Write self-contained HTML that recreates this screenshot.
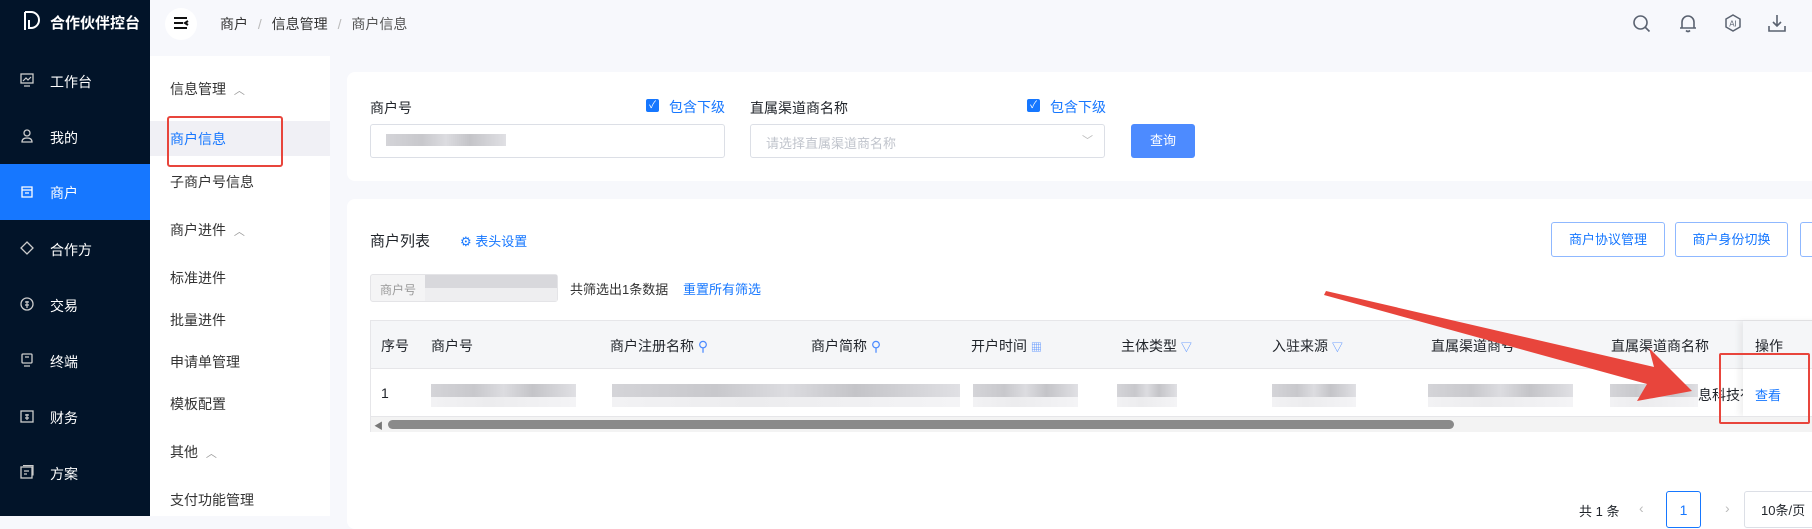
<!DOCTYPE html>
<html><head><meta charset="utf-8"><style>
*{margin:0;padding:0;box-sizing:border-box}
body{width:1812px;height:516px;overflow:hidden;background:#f7f8fc;font-family:"Liberation Sans","Noto Sans CJK SC",sans-serif;font-size:14px;color:#1f2329;position:relative}
.abs{position:absolute;white-space:nowrap}
.side{position:absolute;left:0;top:0;width:150px;height:516px;background:#021429}
.nav{position:absolute;left:0;width:150px;height:56px;color:#fff;font-size:14px}
.nav span{position:absolute;left:50px;top:19px}
.nav svg{position:absolute;left:20px;top:20px}
.menu{position:absolute;left:150px;top:56px;width:180px;height:460px;background:#fff}
.mi{position:absolute;left:20px;color:#333;font-size:14px}
.card{position:absolute;background:#fff;border-radius:8px}
.blur{position:absolute;background:linear-gradient(90deg,#d4d4d8,#c8c8cc 30%,#dcdce0 50%,#c4c4c8 70%,#e0e0e4);height:13px}
.blur2{position:absolute;background:linear-gradient(90deg,#f2f2f4,#ececee 40%,#f4f4f6);height:10px}
.th{position:absolute;top:336px;color:#1f2329}
.btn{position:absolute;border:1px solid #8fb8ff;border-radius:3px;color:#1677ff;font-size:13px;text-align:center;line-height:33px;background:#fff}
</style></head><body>
<div class="side">
 <svg class="abs" style="left:22px;top:10px" width="20" height="22" viewBox="0 0 20 22"><path d="M3 2v18M3 2h6a8 8 0 010 16H7v-8" fill="none" stroke="#fff" stroke-width="2"/></svg>
 <div class="abs" style="left:50px;top:12px;color:#fff;font-weight:bold;font-size:15px">合作伙伴控台</div>
 <div class="nav" style="top:53px"><svg width="14" height="14" viewBox="0 0 14 14"><rect x="1" y="1" width="12" height="9" fill="none" stroke="#ccc" stroke-width="1.3"/><path d="M3 8l3-3 2 2 3-3M4 13h6" stroke="#ccc" fill="none" stroke-width="1.2"/></svg><span>工作台</span></div>
 <div class="nav" style="top:109px"><svg width="14" height="14" viewBox="0 0 14 14"><circle cx="7" cy="4" r="3" fill="none" stroke="#ccc" stroke-width="1.3"/><path d="M2 13q0-4 5-4t5 4z" fill="none" stroke="#ccc" stroke-width="1.3"/></svg><span>我的</span></div>
 <div class="nav" style="top:164px;background:#1677ff"><svg width="14" height="14" viewBox="0 0 14 14"><path d="M2 3h10v10H2zM2 6h10M5 9h4" fill="none" stroke="#fff" stroke-width="1.3"/></svg><span>商户</span></div>
 <div class="nav" style="top:221px"><svg width="14" height="14" viewBox="0 0 14 14"><path d="M7 1l6 6-6 6-6-6z" fill="none" stroke="#ccc" stroke-width="1.3"/></svg><span>合作方</span></div>
 <div class="nav" style="top:277px"><svg width="14" height="14" viewBox="0 0 14 14"><circle cx="7" cy="7" r="6" fill="none" stroke="#ccc" stroke-width="1.3"/><path d="M5 5h4M5 8h4M7 4v7" stroke="#ccc" stroke-width="1.2"/></svg><span>交易</span></div>
 <div class="nav" style="top:333px"><svg width="14" height="14" viewBox="0 0 14 14"><rect x="2" y="1" width="10" height="9" rx="1" fill="none" stroke="#ccc" stroke-width="1.3"/><path d="M4 13h6M5 4h4" stroke="#ccc" stroke-width="1.2"/></svg><span>终端</span></div>
 <div class="nav" style="top:389px"><svg width="14" height="14" viewBox="0 0 14 14"><rect x="1" y="2" width="12" height="11" fill="none" stroke="#ccc" stroke-width="1.3"/><path d="M5 6h4M5 9h4M7 5v6" stroke="#ccc" stroke-width="1.2"/></svg><span>财务</span></div>
 <div class="nav" style="top:445px"><svg width="14" height="14" viewBox="0 0 14 14"><rect x="1" y="2" width="11" height="11" fill="none" stroke="#ccc" stroke-width="1.3"/><path d="M3 0.5h10v10M4 6h5M4 9h3" fill="none" stroke="#ccc" stroke-width="1.2"/></svg><span>方案</span></div>
</div>
<div class="abs" style="left:165px;top:8px;width:32px;height:32px;border-radius:16px;background:#fff"></div>
<svg class="abs" style="left:173px;top:16px" width="16" height="14" viewBox="0 0 16 14"><path d="M1 2h13M1 7h9M1 12h13M15 5l-3 2 3 2" fill="none" stroke="#111" stroke-width="2"/></svg>
<div class="abs" style="left:220px;top:14px;color:#333">商户 <span style="color:#bbb;margin:0 6px">/</span> 信息管理 <span style="color:#bbb;margin:0 6px">/</span> <span style="color:#555">商户信息</span></div>
<svg class="abs" style="left:1632px;top:14px" width="20" height="20" viewBox="0 0 20 20"><circle cx="8.5" cy="8.5" r="6.5" fill="none" stroke="#5a6270" stroke-width="1.6"/><path d="M13 13l4.5 4.5" stroke="#5a6270" stroke-width="1.6"/></svg>
<svg class="abs" style="left:1678px;top:13px" width="20" height="20" viewBox="0 0 20 20"><path d="M4 15V9a6 6 0 0112 0v6zM2 15h16M8 17.5q2 2 4 0" fill="none" stroke="#5a6270" stroke-width="1.6"/></svg>
<svg class="abs" style="left:1723px;top:13px" width="20" height="20" viewBox="0 0 20 20"><path d="M10 2l7 4v8l-7 4-7-4V6z" fill="none" stroke="#5a6270" stroke-width="1.5"/><text x="10" y="13.5" font-size="8" text-anchor="middle" fill="#5a6270" font-family="Liberation Sans">AI</text></svg>
<svg class="abs" style="left:1767px;top:13px" width="20" height="20" viewBox="0 0 20 20"><path d="M10 2v11M6 9l4 4 4-4M2 13v5h16v-5" fill="none" stroke="#5a6270" stroke-width="1.6"/></svg>

<div class="menu">
 <div class="mi" style="top:23px">信息管理 <span style="color:#999;font-size:11px;margin-left:4px">︿</span></div>
 <div class="abs" style="left:0;top:65px;width:180px;height:35px;background:#f0f0f5"></div>
 <div class="mi" style="top:73px;color:#1677ff;left:20px">商户信息</div>
 <div class="mi" style="top:116px">子商户号信息</div>
 <div class="mi" style="top:164px">商户进件 <span style="color:#999;font-size:11px;margin-left:4px">︿</span></div>
 <div class="mi" style="top:212px">标准进件</div>
 <div class="mi" style="top:254px">批量进件</div>
 <div class="mi" style="top:296px">申请单管理</div>
 <div class="mi" style="top:338px">模板配置</div>
 <div class="mi" style="top:386px">其他 <span style="color:#999;font-size:11px;margin-left:4px">︿</span></div>
 <div class="mi" style="top:434px">支付功能管理</div>
</div>
<div class="abs" style="left:167px;top:116px;width:116px;height:51px;border:2px solid #e8453c;border-radius:3px"></div>

<div class="card" style="left:347px;top:72px;width:1480px;height:109px"></div>
<div class="abs" style="left:370px;top:98px">商户号</div>
<div class="abs" style="left:646px;top:99px;width:13px;height:13px;background:#1677ff;border-radius:2px;color:#fff;font-size:10px;line-height:13px;text-align:center">✓</div>
<div class="abs" style="left:669px;top:97px;color:#1677ff">包含下级</div>
<div class="abs" style="left:370px;top:124px;width:355px;height:34px;border:1px solid #dcdfe6;border-radius:3px"></div>
<div class="blur" style="left:386px;top:134px;width:120px;height:12px"></div>
<div class="abs" style="left:750px;top:98px">直属渠道商名称</div>
<div class="abs" style="left:1027px;top:99px;width:13px;height:13px;background:#1677ff;border-radius:2px;color:#fff;font-size:10px;line-height:13px;text-align:center">✓</div>
<div class="abs" style="left:1050px;top:97px;color:#1677ff">包含下级</div>
<div class="abs" style="left:750px;top:124px;width:355px;height:34px;border:1px solid #dcdfe6;border-radius:3px"></div>
<div class="abs" style="left:766px;top:133px;color:#c0c4cc;font-size:13px">请选择直属渠道商名称</div>
<div class="abs" style="left:1082px;top:132px;color:#bbb;font-size:11px">﹀</div>
<div class="abs" style="left:1131px;top:124px;width:64px;height:34px;background:#4d8bff;border-radius:3px;color:#fff;font-size:13px;text-align:center;line-height:34px">查询</div>

<div class="card" style="left:347px;top:199px;width:1480px;height:330px"></div>
<div class="abs" style="left:370px;top:230px;font-size:15px">商户列表</div>
<div class="abs" style="left:460px;top:231px;color:#1677ff;font-size:13px">⚙ 表头设置</div>
<div class="btn" style="left:1551px;top:222px;width:114px;height:35px">商户协议管理</div>
<div class="btn" style="left:1675px;top:222px;width:113px;height:35px">商户身份切换</div>
<div class="btn" style="left:1800px;top:222px;width:40px;height:35px"></div>
<div class="abs" style="left:370px;top:274px;width:188px;height:28px;border:1px solid #e4e4e7;border-radius:3px;background:#f4f4f5"></div>
<div class="abs" style="left:380px;top:281px;color:#999;font-size:12px">商户号</div>
<div class="abs" style="left:425px;top:275px;width:132px;height:26px;background:linear-gradient(180deg,#d8d8dc 50%,#eeeef0 50%)"></div>
<div class="abs" style="left:570px;top:279px;color:#333;font-size:13px">共筛选出1条数据</div>
<div class="abs" style="left:683px;top:279px;color:#1677ff;font-size:13px">重置所有筛选</div>

<div class="abs" style="left:370px;top:320px;width:1450px;height:112px;border:1px solid #e6e6e9"></div>
<div class="abs" style="left:371px;top:321px;width:1450px;height:48px;background:#f5f6f8;border-bottom:1px solid #e6e6e9"></div>
<div class="abs" style="left:1743px;top:321px;width:80px;height:95px;box-shadow:-4px 0 6px rgba(0,0,0,.06);background:transparent"></div>
<div class="th" style="left:381px">序号</div>
<div class="th" style="left:431px">商户号</div>
<div class="th" style="left:610px">商户注册名称 <span style="color:#4d8bff">⚲</span></div>
<div class="th" style="left:811px">商户简称 <span style="color:#4d8bff">⚲</span></div>
<div class="th" style="left:971px">开户时间 <span style="color:#4d8bff;font-size:11px">▦</span></div>
<div class="th" style="left:1121px">主体类型 <span style="color:#4d8bff;font-size:11px">▽</span></div>
<div class="th" style="left:1272px">入驻来源 <span style="color:#4d8bff;font-size:11px">▽</span></div>
<div class="th" style="left:1431px">直属渠道商号</div>
<div class="th" style="left:1611px">直属渠道商名称</div>
<div class="th" style="left:1755px">操作</div>
<div class="abs" style="left:381px;top:385px">1</div>
<div class="blur" style="left:431px;top:384px;width:145px"></div><div class="blur2" style="left:431px;top:397px;width:145px"></div>
<div class="blur" style="left:612px;top:384px;width:348px"></div><div class="blur2" style="left:612px;top:397px;width:348px"></div>
<div class="blur" style="left:973px;top:384px;width:105px"></div><div class="blur2" style="left:973px;top:397px;width:105px"></div>
<div class="blur" style="left:1117px;top:384px;width:60px"></div><div class="blur2" style="left:1117px;top:397px;width:60px"></div>
<div class="blur" style="left:1272px;top:384px;width:84px"></div><div class="blur2" style="left:1272px;top:397px;width:84px"></div>
<div class="blur" style="left:1428px;top:384px;width:145px"></div><div class="blur2" style="left:1428px;top:397px;width:145px"></div>
<div class="blur" style="left:1610px;top:384px;width:88px"></div><div class="blur2" style="left:1610px;top:397px;width:88px"></div>
<div class="abs" style="left:1698px;top:385px">息科技有</div>
<div class="abs" style="left:1743px;top:370px;width:78px;height:46px;background:#fff"></div>
<div class="abs" style="left:1755px;top:385px;color:#1677ff;font-size:13px">查看</div>
<div class="abs" style="left:371px;top:416px;width:1449px;height:16px;background:#f3f3f3;border-top:1px solid #e6e6e9"></div>
<div class="abs" style="left:374px;top:419px;color:#777;font-size:9px">◀</div>
<div class="abs" style="left:388px;top:420px;width:1066px;height:9px;border-radius:5px;background:#8a8a8a"></div>

<svg class="abs" style="left:0;top:0" width="1812" height="516"><path d="M1326 291L1654 367L1649 348L1692 391L1637 401L1647 384L1324 295Z" fill="#e8453c"/></svg>
<div class="abs" style="left:1719px;top:353px;width:91px;height:71px;border:2px solid #e8453c;border-radius:2px"></div>

<div class="abs" style="left:1579px;top:501px;font-size:13px">共 1 条</div>
<div class="abs" style="left:1639px;top:500px;color:#bbb">‹</div>
<div class="abs" style="left:1666px;top:491px;width:35px;height:37px;border:1px solid #1677ff;border-radius:3px;color:#1677ff;text-align:center;line-height:37px">1</div>
<div class="abs" style="left:1725px;top:500px;color:#bbb">›</div>
<div class="abs" style="left:1744px;top:491px;width:80px;height:37px;border:1px solid #dcdfe6;border-radius:3px;padding-left:16px;line-height:37px;font-size:13px">10条/页</div>
</body></html>
